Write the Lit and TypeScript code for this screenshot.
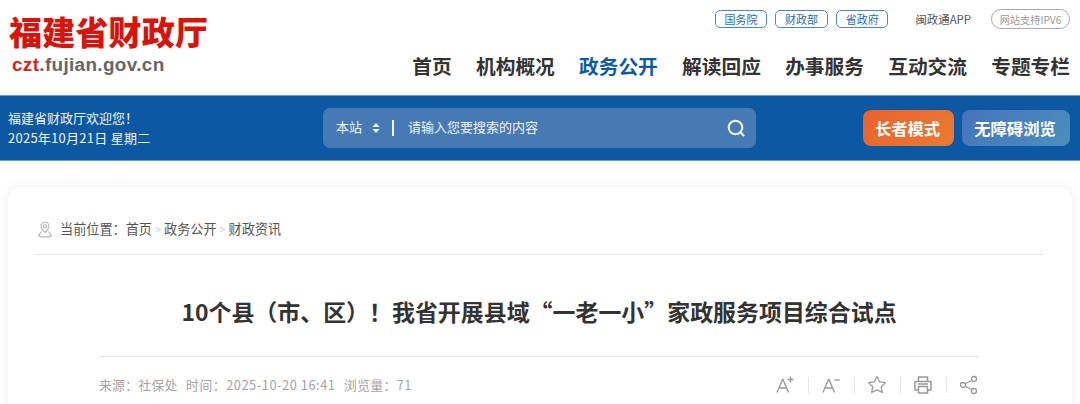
import { LitElement, html, css } from "lit";
import { customElement } from "lit/decorators.js";

@customElement("app-root")
export class AppRoot extends LitElement {
  static styles = css`
    :host {
      display: block;
      width: 1080px;
      height: 404px;
      overflow: hidden;
      background: #fff;
      font-family: "Noto Sans CJK SC", "Liberation Sans", sans-serif;
      color: #333;
    }
    .header {
      height: 95px;
      display: flex;
      justify-content: space-between;
      box-sizing: border-box;
      padding: 0 10px 0 9px;
    }
    .logo {
      display: flex;
      flex-direction: column;
      padding-top: 12px;
    }
    .logo-cn {
      font-size: 33px;
      line-height: 38px;
      font-weight: 900;
      color: #d8140a;
      letter-spacing: 0.2px;
      white-space: nowrap;
    }
    .logo-en {
      margin: 4px 0 0 3px;
      font-family: "Liberation Sans", sans-serif;
      font-weight: 700;
      font-size: 18.9px;
      line-height: 22px;
      color: #666;
      letter-spacing: 0.35px;
    }
    .logo-en b { color: #d8241a; }
    .right {
      display: flex;
      flex-direction: column;
      align-items: flex-end;
    }
    .links {
      display: flex;
      align-items: center;
      margin-top: 9px;
      height: 20px;
      font-size: 11px;
    }
    .tag {
      width: 52.6px;
      height: 18.5px;
      box-sizing: border-box;
      border: 1px solid #4d86c0;
      border-radius: 5px;
      color: #2a6cb0;
      display: flex;
      align-items: center;
      justify-content: center;
      margin-right: 8px;
    }
    .tag:nth-child(3) { margin-right: 0; }
    .app { margin-left: 27px; color: #555; font-size: 11.4px; }
    .ipv6 {
      margin-left: 20px;
      width: 79px;
      height: 20px;
      box-sizing: border-box;
      border: 1px solid #aaa;
      border-radius: 10px;
      color: #999;
      display: flex;
      align-items: center;
      justify-content: center;
      font-size: 10.2px;
    }
    .nav {
      display: flex;
      gap: 24.3px;
      margin-top: 22px;
      font-size: 19.7px;
      line-height: 30px;
      font-weight: 700;
      color: #333;
      white-space: nowrap;
    }
    .nav .on { color: #0d5aa5; }
    .bar {
      height: 66px;
      background: #0c58a2;
      border-top: 1px solid #6f9cc8;
      border-bottom: 1px solid #6f9cc8;
      display: flex;
      align-items: center;
      padding-left: 8px;
      color: #fff;
      box-sizing: border-box;
    }
    .greet {
      width: 315px;
      font-size: 13px;
      line-height: 20px;
      color: #f2f6fb;
    }
    .date { letter-spacing: 0.25px; white-space: nowrap; }
    .search {
      width: 433px;
      height: 40px;
      background: #477aB4;
      border-radius: 7px;
      display: flex;
      align-items: center;
      box-sizing: border-box;
      padding: 0 11px 0 13px;
      font-size: 13px;
      color: #eef3f9;
    }
    .scope { width: 36px; padding-bottom: 3px; }
    .updown { width: 8px; height: 12px; display: block; }
    .sep { width: 2px; height: 16px; background: #f0f4f9; margin: 0 14px 0 12px; }
    .ph { flex: 1; padding-bottom: 3px; }
    .mag { width: 18px; height: 18px; display: block; }
    .btn {
      height: 36px;
      border-radius: 8px;
      display: flex;
      align-items: center;
      justify-content: center;
      font-size: 16.3px;
      font-weight: 700;
      color: #fff;
      box-sizing: border-box;
      padding-right: 2px;
    }
    .elder {
      width: 91px;
      margin-left: 107px;
      background: linear-gradient(135deg, #e8622c, #ec7a33);
    }
    .access {
      width: 108px;
      margin-left: 8px;
      background: linear-gradient(135deg, #4773bb, #4a8fbd);
    }
    .stage {
      padding: 26px 0 0 8px;
      background: #fff;
    }
    .card {
      width: 1064px;
      height: 260px;
      box-sizing: border-box;
      border-radius: 12px;
      background: #fff;
      box-shadow: 0 0 14px rgba(0, 0, 0, 0.07);
      padding: 0 28px 0 26px;
    }
    .crumb {
      height: 68px;
      border-bottom: 1px solid #e6e6e6;
      display: flex;
      align-items: center;
      padding: 17px 0 0 3px;
      box-sizing: border-box;
      font-size: 13.15px;
      color: #555;
      white-space: nowrap;
      line-height: 16px;
    }
    .pin { width: 16px; height: 17px; display: block; margin-right: 7px; }
    .gt { color: #ccc; font-size: 11px; width: 12px; text-align: center; }
    h1 {
      margin: 0;
      height: 102px;
      box-sizing: border-box;
      padding-top: 39px;
      text-align: center;
      font-size: 22.95px;
      line-height: 34px;
      font-weight: 700;
      color: #333;
      margin-inline: 65px 65px;
      border-bottom: 1px solid #e6e6e6;
      white-space: nowrap;
    }
    .meta {
      margin: 0 65px;
      display: flex;
      justify-content: space-between;
      align-items: center;
      padding-top: 17px;
      font-size: 12.8px;
      line-height: 22px;
      color: #a3a3a3;
    }
    .info { display: flex; gap: 8.5px; letter-spacing: 0.3px; }
    .time { letter-spacing: 0.55px; }
    .views { letter-spacing: 0.4px; }
    .tools { display: flex; align-items: center; margin-right: 0; }
    .tools svg { width: 20px; height: 20px; display: block; }
    .div { width: 1px; height: 16px; background: #e6e6e6; margin: 0 12px 0 13px; }
  `;

  render() {
    const nav = ["首页", "机构概况", "政务公开", "解读回应", "办事服务", "互动交流", "专题专栏"];
    return html`
      <div class="header">
        <div class="logo">
          <div class="logo-cn">福建省财政厅</div>
          <div class="logo-en"><b>czt</b>.fujian.gov.cn</div>
        </div>
        <div class="right">
          <div class="links">
            <span class="tag">国务院</span>
            <span class="tag">财政部</span>
            <span class="tag">省政府</span>
            <span class="app">闽政通APP</span>
            <span class="ipv6">网站支持IPV6</span>
          </div>
          <div class="nav">
            ${nav.map((n, i) => html`<span class=${i === 2 ? "on" : ""}>${n}</span>`)}
          </div>
        </div>
      </div>
      <div class="bar">
        <div class="greet">
          <div>福建省财政厅欢迎您！</div>
          <div class="date">2025年10月21日 星期二</div>
        </div>
        <div class="search">
          <span class="scope">本站</span>
          <svg class="updown" viewBox="0 0 8 12"><path d="M4 1 7.500 5H.5zM4 11 .5 7h7z" fill="#eef3f9"/></svg>
          <span class="sep"></span>
          <span class="ph">请输入您要搜索的内容</span>
          <svg class="mag" viewBox="0 0 18 18" fill="none" stroke="#f4f7fb" stroke-width="2" stroke-linecap="round"><circle cx="8.500" cy="8.500" r="6.800"/><path d="M13.600 13.600 16.600 16.400"/></svg>
        </div>
        <div class="btn elder">长者模式</div>
        <div class="btn access">无障碍浏览</div>
      </div>
      <div class="stage">
        <div class="card">
          <div class="crumb">
            <svg class="pin" viewBox="0 0 16 17" fill="none" stroke="#b5b5b5" stroke-width="1.100"><path d="M8 11.500C5.500 9 4 7.300 4 5.200a4 4 0 0 1 8 0C12 7.300 10.500 9 8 11.500z"/><circle cx="8" cy="5.200" r="1.500"/><path d="M4.500 10.500 1.500 14.500c2 2 11 2 13 0l-3-4"/></svg>
            <span>当前位置：首页</span><span class="gt">&gt;</span><span>政务公开</span><span class="gt">&gt;</span><span>财政资讯</span>
          </div>
          <h1>10个县（市、区）！我省开展县域“一老一小”家政服务项目综合试点</h1>
          <div class="meta">
            <div class="info">
              <span>来源：社保处</span><span class="time">时间：2025-10-20 16:41</span><span class="views">浏览量：71</span>
            </div>
            <div class="tools">
              <svg viewBox="0 0 20 20" fill="none" stroke="#999" stroke-width="1.400"><path d="M2 17.500 7.500 4.500h.5L13.500 17.500M4 13h7.500"/><path d="M15.500 1.500v6M12.500 4.500h6"/></svg>
              <span class="div"></span>
              <svg viewBox="0 0 20 20" fill="none" stroke="#999" stroke-width="1.400"><path d="M2 17.500 7.500 4.500h.5L13.500 17.500M4 13h7.500"/><path d="M13.500 5h5"/></svg>
              <span class="div"></span>
              <svg viewBox="0 0 20 20" fill="none" stroke="#999" stroke-width="1.300" stroke-linejoin="round"><path d="M10 1.500 12.600 6.800 18.500 7.600 14.200 11.700 15.300 17.500 10 14.800 4.700 17.500 5.800 11.700 1.500 7.600 7.400 6.800z"/></svg>
              <span class="div"></span>
              <svg viewBox="0 0 20 20" fill="none" stroke="#999" stroke-width="1.500" stroke-linejoin="round"><path d="M5.500 6V2h9v4M5.500 15H2V6.500h16V15h-3.500"/><path d="M5.500 11.500h9V18h-9zM5 9h10"/></svg>
              <span class="div"></span>
              <svg viewBox="0 0 20 20" fill="none" stroke="#999" stroke-width="1.300"><circle cx="4" cy="10" r="2.500"/><circle cx="15" cy="4" r="2.500"/><circle cx="15" cy="16" r="2.500"/><path d="M6.200 8.800 12.800 5.200M6.200 11.200 12.800 14.800"/></svg>
            </div>
          </div>
        </div>
      </div>
    `;
  }
}
